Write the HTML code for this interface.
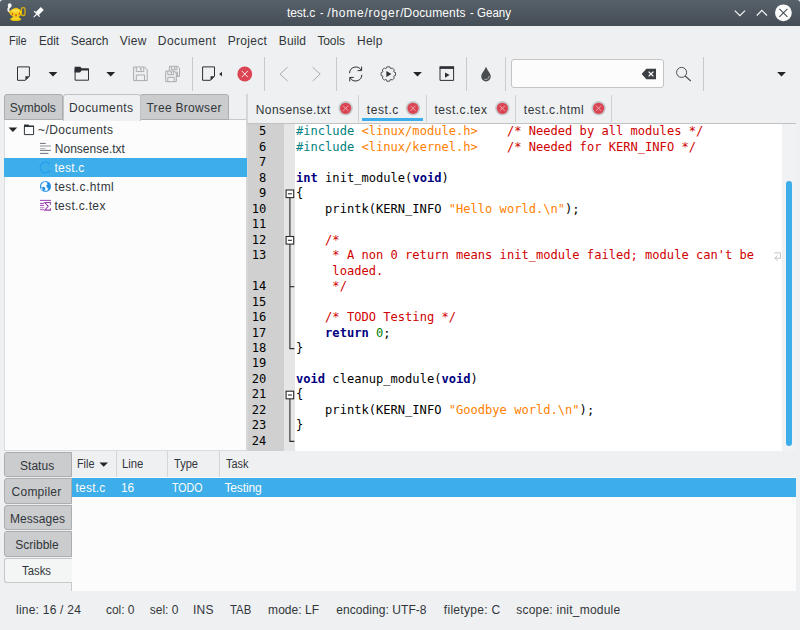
<!DOCTYPE html>
<html><head><meta charset="utf-8"><title>test.c - /home/roger/Documents - Geany</title>
<style>
html,body{margin:0;padding:0;}
body{width:800px;height:630px;overflow:hidden;background:#eff0f1;position:relative;font-family:"Liberation Sans",sans-serif;font-size:12px;color:#31363b;}
.a{position:absolute;}
.t{position:absolute;white-space:pre;line-height:14px;height:14px;}
svg{position:absolute;overflow:visible;}
#titlebar{left:0;top:0;width:800px;border-radius:3px 3px 0 0;height:25.7px;background:linear-gradient(#576169,#454d56);}
.sep{position:absolute;width:1px;background:#c9cacc;top:57px;height:34px;}
.tab{position:absolute;box-sizing:border-box;border:1px solid #abadaf;background:#cbcccd;border-radius:3px 3px 0 0;}
.vtab{position:absolute;box-sizing:border-box;border:1px solid #abadaf;background:#cbcccd;border-radius:3px 0 0 3px;left:4px;width:68px;height:25.4px;}
.code{font-family:"DejaVu Sans Mono","Liberation Mono",monospace;font-size:12.09px;line-height:15.475px;color:#000;}
.ln{position:absolute;left:248px;width:18.3px;text-align:right;height:15.475px;white-space:pre;}
.cl{position:absolute;left:296px;height:15.475px;white-space:pre;}
.pp{color:#007f7f}.st{color:#ff8000}.cm{color:#d00000}.kw{color:#00007f;font-weight:bold}.nu{color:#007f00}

</style></head><body>

<div id="titlebar" class="a"></div>
<svg width="800" height="26" style="left:0;top:0" viewBox="0 0 800 26">
 <!-- minimize / maximize / close -->
 <path d="M734.8 10.6 L739.9 15.7 L745 10.6" fill="none" stroke="#fcfcfc" stroke-width="1.1"/>
 <path d="M756.8 15.5 L761.9 10.4 L767 15.5" fill="none" stroke="#fcfcfc" stroke-width="1.1"/>
 <circle cx="783.4" cy="12.8" r="8.4" fill="#fcfcfc"/>
 <path d="M779.4 8.8 L787.4 16.8 M787.4 8.8 L779.4 16.8" stroke="#475057" stroke-width="1.1" fill="none"/>
 <!-- pin -->
 <g transform="translate(36.9,13.9) rotate(45)" fill="#fcfcfc">
  <rect x="-2.1" y="-7.6" width="4.2" height="7.4"/>
  <rect x="-3.9" y="-0.7" width="7.8" height="1.3"/>
  <path d="M-0.7 0.4 L0.7 0.4 L0.45 4.7 L-0.45 4.7 Z"/>
 </g>
 <!-- geany lamp icon -->
 <g>
  <path d="M8.1 11.3 C9.4 10.6 10.6 10.6 11.4 11 L11.2 15.6 C10.2 14.2 9 12.8 8.1 11.3 Z" fill="#eec20e"/>
  <rect x="21.4" y="7.7" width="3.6" height="7.8" rx="1.6" ry="1.6" fill="none" stroke="#ddb00a" stroke-width="1.3"/>
  <ellipse cx="15.7" cy="19.2" rx="5.5" ry="1.8" fill="#e6ba0a"/>
  <path d="M12.8 16.4 H18.8 L19.6 18.6 H12 Z" fill="#efc612"/>
  <ellipse cx="15.7" cy="18.7" rx="4.6" ry="1.1" fill="#f6d82c"/>
  <ellipse cx="15.85" cy="12.8" rx="5.7" ry="4.6" fill="#f2cc16"/>
  <ellipse cx="15.4" cy="10.8" rx="3.8" ry="1.8" fill="#f8de48"/>
  <ellipse cx="16" cy="8.5" rx="1.8" ry="0.8" fill="#ecc114"/>
  <ellipse cx="12.5" cy="14" rx="0.65" ry="1.2" fill="#e2512a"/>
  <ellipse cx="16" cy="15.3" rx="0.75" ry="1.25" fill="#e2512a"/>
  <ellipse cx="19.5" cy="13.8" rx="0.6" ry="1.2" fill="#e2512a"/>
  <path d="M8.7 10.8 C7.6 9.4 8.4 8.4 9.2 7.4" fill="none" stroke="#f4f4f4" stroke-width="1.9" stroke-linecap="round"/>
  <ellipse cx="9.7" cy="5.5" rx="1.9" ry="2.2" fill="#f8f8f8"/>
 </g>
</svg>

<div class="sep" style="left:192.1px"></div><div class="sep" style="left:263.7px"></div><div class="sep" style="left:336.1px"></div><div class="sep" style="left:466.1px"></div><div class="sep" style="left:504.9px"></div><div class="sep" style="left:702.5px"></div><div class="a" style="left:511px;top:59px;width:153px;height:29px;box-sizing:border-box;border:1px solid #c2c4c6;border-radius:3px;background:#fcfcfc"></div><svg width="800" height="40" style="left:0;top:54px" viewBox="0 54 800 40">
<path d="M17.5 66.9 H29.4 V76.3 L25.4 80.3 H17.5 Z" fill="none" stroke="#2c3034" stroke-width="1"/><path d="M25.4 80.3 V76.3 H29.4 Z" fill="#2c3034"/>
<path d="M48.6 72.0 L57.4 72.0 L53.0 76.4 Z" fill="#232629"/>
<path d="M75.1 69 H88.5 V80.2 H75.1 Z" fill="none" stroke="#2c3034" stroke-width="1"/><path d="M74.6 66.8 H80.4 L81.8 68.5 H89 V70.5 H81.6 L80 72.4 H74.6 Z" fill="#2c3034"/>
<path d="M106.3 72.0 L115.1 72.0 L110.7 76.4 Z" fill="#232629"/>
<path d="M133.6 67.0 H144.6 L147.2 69.6 V80.6 H133.6 Z" fill="none" stroke="#a9abad" stroke-width="1"/><path d="M136.3 67.0 V71.6 H143.8 V67.0" fill="none" stroke="#a9abad" stroke-width="1"/><path d="M140.8 68.0 V70.4" stroke="#a9abad" stroke-width="1.4"/><path d="M136.3 80.6 V75.0 H144.5 V80.6" fill="none" stroke="#a9abad" stroke-width="1"/>
<path d="M169.4 66.3 H177.5 L179.5 68.2 V76.4 H169.4 Z" fill="none" stroke="#a9abad" stroke-width="1"/><path d="M171.4 66.3 V69.7 H176.9 V66.3" fill="none" stroke="#a9abad" stroke-width="1"/><path d="M174.7 67.0 V68.8" stroke="#a9abad" stroke-width="1.4"/><path d="M171.4 76.4 V72.2 H177.5 V76.4" fill="none" stroke="#a9abad" stroke-width="1"/>
<path d="M165.7 71.1 H174.3 L176.3 73.1 V81.7 H165.7 Z" fill="#eff0f1" stroke="#a9abad" stroke-width="1"/><path d="M167.8 71.1 V74.7 H173.7 V71.1" fill="none" stroke="#a9abad" stroke-width="1"/><path d="M171.3 71.9 V73.8" stroke="#a9abad" stroke-width="1.4"/><path d="M167.8 81.7 V77.3 H174.2 V81.7" fill="none" stroke="#a9abad" stroke-width="1"/>
<path d="M202.6 66.9 H214.5 V76.3 L210.5 80.3 H202.6 Z" fill="none" stroke="#2c3034" stroke-width="1"/><path d="M210.5 80.3 V76.3 H214.5 Z" fill="#2c3034"/>
<path d="M222 71.8 V76.4 L219.2 74.1 Z" fill="#2c3034"/>
<circle cx="244.8" cy="74" r="7.4" fill="#da4453"/><path d="M241.7 70.9 L247.9 77.1 M247.9 70.9 L241.7 77.1" stroke="#fcfcfc" stroke-width="0.9" fill="none"/>
<path d="M287.6 67.2 L280 74.1 L287.6 81" fill="none" stroke="#a9abad" stroke-width="1"/>
<path d="M312.6 67.2 L320.2 74.1 L312.6 81" fill="none" stroke="#a9abad" stroke-width="1"/>
<g fill="none" stroke="#2c3034" stroke-width="1"><path d="M349.6 73.2 A6.2 6.2 0 0 1 361.2 70.2"/><path d="M361.6 66.6 V70.6 H357.6"/><path d="M361.8 74.8 A6.2 6.2 0 0 1 350.2 77.8"/><path d="M349.8 81.4 V77.4 H353.8"/></g>
<path d="M386.8 66.8 L389.8 66.8 L390.2 68.3 L391.0 68.6 L392.3 67.9 L394.4 70.0 L393.7 71.3 L394.0 72.1 L395.5 72.5 L395.5 75.5 L394.0 75.9 L393.7 76.7 L394.4 78.0 L392.3 80.1 L391.0 79.4 L390.2 79.7 L389.8 81.2 L386.8 81.2 L386.4 79.7 L385.6 79.4 L384.3 80.1 L382.2 78.0 L382.9 76.7 L382.6 75.9 L381.1 75.5 L381.1 72.5 L382.6 72.1 L382.9 71.3 L382.2 70.0 L384.3 67.9 L385.6 68.6 L386.4 68.3 Z" fill="none" stroke="#3f4347" stroke-width="0.9"/><path d="M386.4 71 L391.4 74 L386.4 77 Z" fill="#2c3034"/>
<path d="M413.1 72.0 L421.9 72.0 L417.5 76.4 Z" fill="#232629"/>
<path d="M440 68 H453.6 V80.4 H440 Z" fill="none" stroke="#2c3034" stroke-width="1"/><rect x="439.5" y="66.2" width="14.6" height="2.6" fill="#2c3034"/><path d="M445 72.4 L449.6 75 L445 77.8 Z" fill="#2c3034"/>
<path d="M486 66.8 C487.5 70.5 490.8 73.5 490.8 76.6 A4.8 4.8 0 0 1 481.2 76.6 C481.2 73.5 484.5 70.5 486 66.8 Z" fill="#4a4d50"/><path d="M489 76 A3.2 3.2 0 0 1 484.4 79.2" fill="none" stroke="#b8babc" stroke-width="0.9"/>
<path d="M641.6 74 L646.4 68.7 H656 V79.3 H646.4 Z" fill="#3b3f43"/><path d="M648.6 71.6 L653.4 76.4 M653.4 71.6 L648.6 76.4" stroke="#fcfcfc" stroke-width="1.3"/>
<circle cx="681.6" cy="72.4" r="5" fill="none" stroke="#4a4d50" stroke-width="1"/><path d="M685.2 76 L690.8 81" stroke="#4a4d50" stroke-width="1.1"/>
<path d="M777.1 72.0 L785.9 72.0 L781.5 76.4 Z" fill="#232629"/>
</svg>
<div class="a" style="left:3.5px;top:119.3px;width:243.5px;height:331.5px;box-sizing:border-box;background:#fcfcfc;border:1px solid #dadcde;border-top-color:#c6c8ca;border-right:none"></div>
<div class="a" style="left:246.3px;top:94px;width:1.5px;height:357px;background:#d4d6d8"></div>
<div class="tab" style="left:3.6px;top:93.9px;width:59.4px;height:25.9px"></div>
<div class="tab" style="left:140px;top:93.9px;width:89px;height:25.9px"></div>
<div class="tab" style="left:62.6px;top:93.6px;width:78px;height:27.4px;background:#eff0f1;border-color:#c0c2c4;border-bottom:none"></div>
<div class="a" style="left:4.3px;top:158.2px;width:242.7px;height:18.8px;background:#3daee9"></div>
<svg width="250" height="100" style="left:0;top:120px" viewBox="0 120 250 100"><path d="M8.6 127.6 H17.2 L12.9 132 Z" fill="#232629"/><path d="M24.4 126.4 H33.6 V134.6 H24.4 Z" fill="none" stroke="#31363b" stroke-width="1"/><path d="M24 124.4 H28.4 L29.4 125.6 H34 V127 H24 Z" fill="#31363b"/><path d="M40 143.4 H45.7 M40 150.4 H50.9 M40 153.4 H48.4" stroke="#5a6068" stroke-width="0.9"/><path d="M40 146 H50.9" stroke="#a4a9ae" stroke-width="1.3"/><path d="M40 148.6 H45.6" stroke="#a4a9ae" stroke-width="0.9"/><path d="M49.8 164.3 A5.4 5.4 0 1 0 49.8 170.7" fill="none" stroke="#229df0" stroke-width="1.1"/><circle cx="45.43" cy="186.43" r="5.55" fill="#2190e4"/><path d="M44.29 182.00 L46.86 182.57 L47.14 184.57 L46.00 185.71 L46.86 187.43 L48.00 188.86 L47.14 190.57 L44.57 190.86 L45.43 189.14 L45.43 187.71 L43.71 186.57 L42.00 187.14 L41.14 186.57 L41.71 184.29 L43.14 182.86 Z M41.43 187.71 L42.57 190.00 L42.00 190.29 L41.00 188.29 Z" fill="#fcfcfc" stroke="#fcfcfc" stroke-width="0.4" stroke-linejoin="round"/><path d="M40 200.4 H50.9 M40 203.4 H43.9 M40 205.4 H44.1" stroke="#9b3fb0" stroke-width="1"/><path d="M40 207.7 H44.3 M40 209.6 H44" stroke="#b97cc8" stroke-width="1.1"/><path d="M50.4 204.7 V202.5 H44.8 L48.2 206.3 L44.8 210.1 H50.4 V208.3" fill="none" stroke="#9b3fb0" stroke-width="1.1"/></svg>
<div class="a" style="left:358.1px;top:95px;width:1px;height:27px;background:#cfd1d3"></div>
<div class="a" style="left:425.9px;top:95px;width:1px;height:27px;background:#cfd1d3"></div>
<div class="a" style="left:515.1px;top:95px;width:1px;height:27px;background:#cfd1d3"></div>
<div class="a" style="left:611.1px;top:95px;width:1px;height:27px;background:#cfd1d3"></div>
<div class="a" style="left:362px;top:118.4px;width:61px;height:2.8px;background:#3daee9"></div>
<svg width="800" height="30" style="left:0;top:95px" viewBox="0 95 800 30"><circle cx="345.6" cy="108.3" r="7.2" fill="#c6c9cb"/><circle cx="345.6" cy="108.3" r="5.6" fill="#da4453"/><path d="M343.1 105.8 L348.1 110.8 M348.1 105.8 L343.1 110.8" stroke="#efb3b9" stroke-width="0.9"/><circle cx="413" cy="108.3" r="7.2" fill="#c6c9cb"/><circle cx="413" cy="108.3" r="5.6" fill="#da4453"/><path d="M410.5 105.8 L415.5 110.8 M415.5 105.8 L410.5 110.8" stroke="#efb3b9" stroke-width="0.9"/><circle cx="502.4" cy="108.3" r="7.2" fill="#c6c9cb"/><circle cx="502.4" cy="108.3" r="5.6" fill="#da4453"/><path d="M499.9 105.8 L504.9 110.8 M504.9 105.8 L499.9 110.8" stroke="#efb3b9" stroke-width="0.9"/><circle cx="598.6" cy="108.3" r="7.2" fill="#c6c9cb"/><circle cx="598.6" cy="108.3" r="5.6" fill="#da4453"/><path d="M596.1 105.8 L601.1 110.8 M601.1 105.8 L596.1 110.8" stroke="#efb3b9" stroke-width="0.9"/></svg>
<div class="a" style="left:247px;top:122.6px;width:549px;height:1px;background:#c0c2c4"></div>
<div class="a" style="left:247px;top:450.6px;width:549px;height:1px;background:#c0c2c4"></div>
<div class="a" style="left:247.6px;top:123.6px;width:534.4px;height:327px;background:#fff"></div>
<div class="a" style="left:247.6px;top:123.6px;width:36.1px;height:327px;background:#d0d0d0"></div>
<div class="a" style="left:283.7px;top:123.6px;width:11.3px;height:327px;background:#e6e6e6"></div>
<div class="a" style="left:782px;top:123.6px;width:13.6px;height:327px;background:#f1f2f3"></div>
<div class="a" style="left:786px;top:181px;width:6px;height:265px;background:#3daee9;border-radius:3px"></div>
<div class="code">
<div class="ln" style="top:124.3px">5</div>
<div class="cl" style="top:124.3px"><span class="pp">#include </span><span class="st">&lt;linux/module.h&gt;</span>    <span class="cm">/* Needed by all modules */</span></div>
<div class="ln" style="top:139.8px">6</div>
<div class="cl" style="top:139.8px"><span class="pp">#include </span><span class="st">&lt;linux/kernel.h&gt;</span>    <span class="cm">/* Needed for KERN_INFO */</span></div>
<div class="ln" style="top:155.2px">7</div>
<div class="ln" style="top:170.7px">8</div>
<div class="cl" style="top:170.7px"><span class="kw">int</span> init_module(<span class="kw">void</span>)</div>
<div class="ln" style="top:186.2px">9</div>
<div class="cl" style="top:186.2px">{</div>
<div class="ln" style="top:201.7px">10</div>
<div class="cl" style="top:201.7px">    printk(KERN_INFO <span class="st">"Hello world.\n"</span>);</div>
<div class="ln" style="top:217.1px">11</div>
<div class="ln" style="top:232.6px">12</div>
<div class="cl" style="top:232.6px">    <span class="cm">/*</span></div>
<div class="ln" style="top:248.1px">13</div>
<div class="cl" style="top:248.1px"><span class="cm">     * A non 0 return means init_module failed; module can't be</span></div>
<div class="cl" style="top:263.6px"><span class="cm">     loaded.</span></div>
<div class="ln" style="top:279.1px">14</div>
<div class="cl" style="top:279.1px"><span class="cm">     */</span></div>
<div class="ln" style="top:294.5px">15</div>
<div class="ln" style="top:310.0px">16</div>
<div class="cl" style="top:310.0px">    <span class="cm">/* TODO Testing */</span></div>
<div class="ln" style="top:325.5px">17</div>
<div class="cl" style="top:325.5px">    <span class="kw">return</span> <span class="nu">0</span>;</div>
<div class="ln" style="top:340.9px">18</div>
<div class="cl" style="top:340.9px">}</div>
<div class="ln" style="top:356.4px">19</div>
<div class="ln" style="top:371.9px">20</div>
<div class="cl" style="top:371.9px"><span class="kw">void</span> cleanup_module(<span class="kw">void</span>)</div>
<div class="ln" style="top:387.4px">21</div>
<div class="cl" style="top:387.4px">{</div>
<div class="ln" style="top:402.9px">22</div>
<div class="cl" style="top:402.9px">    printk(KERN_INFO <span class="st">"Goodbye world.\n"</span>);</div>
<div class="ln" style="top:418.3px">23</div>
<div class="cl" style="top:418.3px">}</div>
<div class="ln" style="top:433.8px">24</div>
</div>
<svg width="800" height="330" style="left:0;top:123px" viewBox="0 123 800 330"><g stroke="#2a2a2a" stroke-width="1.1" fill="none"><path d="M289.9 197.5 V348.6 H294.29999999999995"/><path d="M289.9 286.7 H294.29999999999995"/><path d="M289.9 398.7 V441.4 H294.29999999999995"/><rect x="286.1" y="190.0" width="7.6" height="7.6" fill="#fff"/><path d="M287.9 193.8 H291.9"/><rect x="286.1" y="236.5" width="7.6" height="7.6" fill="#fff"/><path d="M287.9 240.3 H291.9"/><rect x="286.1" y="391.2" width="7.6" height="7.6" fill="#fff"/><path d="M287.9 395.0 H291.9"/></g><path d="M774.3 252.9 H780.5 V258.2 H775 M777.6 255.5 L774.8 258.2 L777.6 260.9" stroke="#c4c4c4" stroke-width="1" fill="none"/></svg>
<div class="a" style="left:72px;top:451px;width:724px;height:139.6px;background:#fcfcfc"></div>
<div class="a" style="left:72px;top:451px;width:724px;height:26.4px;background:#eff0f1"></div>
<div class="a" style="left:116.1px;top:451px;width:1px;height:26.4px;background:#d3d5d7"></div>
<div class="a" style="left:166.9px;top:451px;width:1px;height:26.4px;background:#d3d5d7"></div>
<div class="a" style="left:218.9px;top:451px;width:1px;height:26.4px;background:#d3d5d7"></div>
<div class="a" style="left:72px;top:477.6px;width:724px;height:19px;background:#3daee9"></div>
<div class="vtab" style="top:452.0px"></div>
<div class="vtab" style="top:478.4px"></div>
<div class="vtab" style="top:504.8px"></div>
<div class="vtab" style="top:531.2px"></div>
<div class="vtab" style="top:557.6px;background:#f4f5f5;border-color:#c6c8ca;border-right:none;width:68px"></div>
<div class="a" style="left:71.4px;top:583px;width:1px;height:7.6px;background:#c6c8ca"></div>
<svg width="20" height="10" style="left:98px;top:460px" viewBox="98 460 20 10"><path d="M99.4 462.4 H108 L103.7 466.8 Z" fill="#232629"/></svg>
<!-- text labels -->
<div class="t" style="left:286.9px;top:6.0px;letter-spacing:-0.08px;color:#fcfcfc;">test.c</div>
<div class="t" style="left:320.2px;top:6.0px;letter-spacing:0.00px;color:#fcfcfc;transform:scaleX(0.850);transform-origin:0 0;">-</div>
<div class="t" style="left:327.3px;top:6.0px;letter-spacing:0.75px;color:#fcfcfc;">/home/roger/</div>
<div class="t" style="left:403.6px;top:6.0px;letter-spacing:0.14px;color:#fcfcfc;">Documents</div>
<div class="t" style="left:470.4px;top:6.0px;letter-spacing:0.00px;color:#fcfcfc;transform:scaleX(0.950);transform-origin:0 0;">-</div>
<div class="t" style="left:477.2px;top:6.0px;letter-spacing:0.00px;color:#fcfcfc;transform:scaleX(0.962);transform-origin:0 0;">Geany</div>
<div class="t" style="left:9.1px;top:34.0px;letter-spacing:0.00px;transform:scaleX(0.905);transform-origin:0 0;">File</div>
<div class="t" style="left:39.0px;top:34.0px;letter-spacing:0.00px;transform:scaleX(0.967);transform-origin:0 0;">Edit</div>
<div class="t" style="left:70.8px;top:34.0px;letter-spacing:-0.09px;">Search</div>
<div class="t" style="left:119.8px;top:34.0px;letter-spacing:0.27px;">View</div>
<div class="t" style="left:157.8px;top:34.0px;letter-spacing:0.47px;">Document</div>
<div class="t" style="left:227.8px;top:34.0px;letter-spacing:0.27px;">Project</div>
<div class="t" style="left:278.8px;top:34.0px;letter-spacing:0.08px;">Build</div>
<div class="t" style="left:317.4px;top:34.0px;letter-spacing:-0.10px;">Tools</div>
<div class="t" style="left:357.0px;top:34.0px;letter-spacing:0.24px;">Help</div>
<div class="t" style="left:9.8px;top:101.0px;letter-spacing:-0.00px;">Symbols</div>
<div class="t" style="left:69.0px;top:101.0px;letter-spacing:0.41px;">Documents</div>
<div class="t" style="left:146.4px;top:101.0px;letter-spacing:0.31px;">Tree Browser</div>
<div class="t" style="left:38.0px;top:123.0px;letter-spacing:0.40px;">~/Documents</div>
<div class="t" style="left:54.8px;top:142.0px;letter-spacing:0.01px;">Nonsense.txt</div>
<div class="t" style="left:54.4px;top:161.0px;letter-spacing:0.26px;color:#fcfcfc;">test.c</div>
<div class="t" style="left:54.4px;top:180.0px;letter-spacing:0.47px;">test.c.html</div>
<div class="t" style="left:54.4px;top:199.0px;letter-spacing:0.33px;">test.c.tex</div>
<div class="t" style="left:255.8px;top:103.0px;letter-spacing:0.41px;">Nonsense.txt</div>
<div class="t" style="left:366.8px;top:103.0px;letter-spacing:0.58px;">test.c</div>
<div class="t" style="left:434.4px;top:103.0px;letter-spacing:0.51px;">test.c.tex</div>
<div class="t" style="left:523.8px;top:103.0px;letter-spacing:0.53px;">test.c.html</div>
<div class="t" style="left:20.0px;top:459.0px;letter-spacing:0.03px;">Status</div>
<div class="t" style="left:11.6px;top:485.0px;letter-spacing:0.23px;">Compiler</div>
<div class="t" style="left:9.9px;top:512.0px;letter-spacing:0.07px;">Messages</div>
<div class="t" style="left:15.2px;top:538.0px;letter-spacing:0.02px;">Scribble</div>
<div class="t" style="left:22.4px;top:564.0px;letter-spacing:0.00px;transform:scaleX(0.945);transform-origin:0 0;">Tasks</div>
<div class="t" style="left:77.0px;top:457.0px;letter-spacing:0.00px;transform:scaleX(0.900);transform-origin:0 0;">File</div>
<div class="t" style="left:122.4px;top:457.0px;letter-spacing:0.00px;transform:scaleX(0.943);transform-origin:0 0;">Line</div>
<div class="t" style="left:173.8px;top:457.0px;letter-spacing:0.00px;transform:scaleX(0.923);transform-origin:0 0;">Type</div>
<div class="t" style="left:226.0px;top:457.0px;letter-spacing:0.00px;transform:scaleX(0.907);transform-origin:0 0;">Task</div>
<div class="t" style="left:75.4px;top:481.0px;letter-spacing:0.26px;color:#fcfcfc;">test.c</div>
<div class="t" style="left:121.4px;top:481.0px;letter-spacing:0.00px;color:#fcfcfc;transform:scaleX(0.988);transform-origin:0 0;">16</div>
<div class="t" style="left:171.8px;top:481.0px;letter-spacing:0.00px;color:#fcfcfc;transform:scaleX(0.888);transform-origin:0 0;">TODO</div>
<div class="t" style="left:224.4px;top:481.0px;letter-spacing:-0.11px;color:#fcfcfc;">Testing</div>
<div class="t" style="left:16.0px;top:603.0px;letter-spacing:0.23px;">line: 16 / 24</div>
<div class="t" style="left:106.0px;top:603.0px;letter-spacing:-0.06px;">col: 0</div>
<div class="t" style="left:149.8px;top:603.0px;letter-spacing:-0.02px;">sel: 0</div>
<div class="t" style="left:193.0px;top:603.0px;letter-spacing:0.19px;">INS</div>
<div class="t" style="left:229.7px;top:603.0px;letter-spacing:0.00px;transform:scaleX(0.944);transform-origin:0 0;">TAB</div>
<div class="t" style="left:268.1px;top:603.0px;letter-spacing:0.04px;">mode: LF</div>
<div class="t" style="left:336.2px;top:603.0px;letter-spacing:0.07px;">encoding: UTF-8</div>
<div class="t" style="left:443.8px;top:603.0px;letter-spacing:0.30px;">filetype: C</div>
<div class="t" style="left:516.2px;top:603.0px;letter-spacing:0.23px;">scope: init_module</div>
</body></html>
